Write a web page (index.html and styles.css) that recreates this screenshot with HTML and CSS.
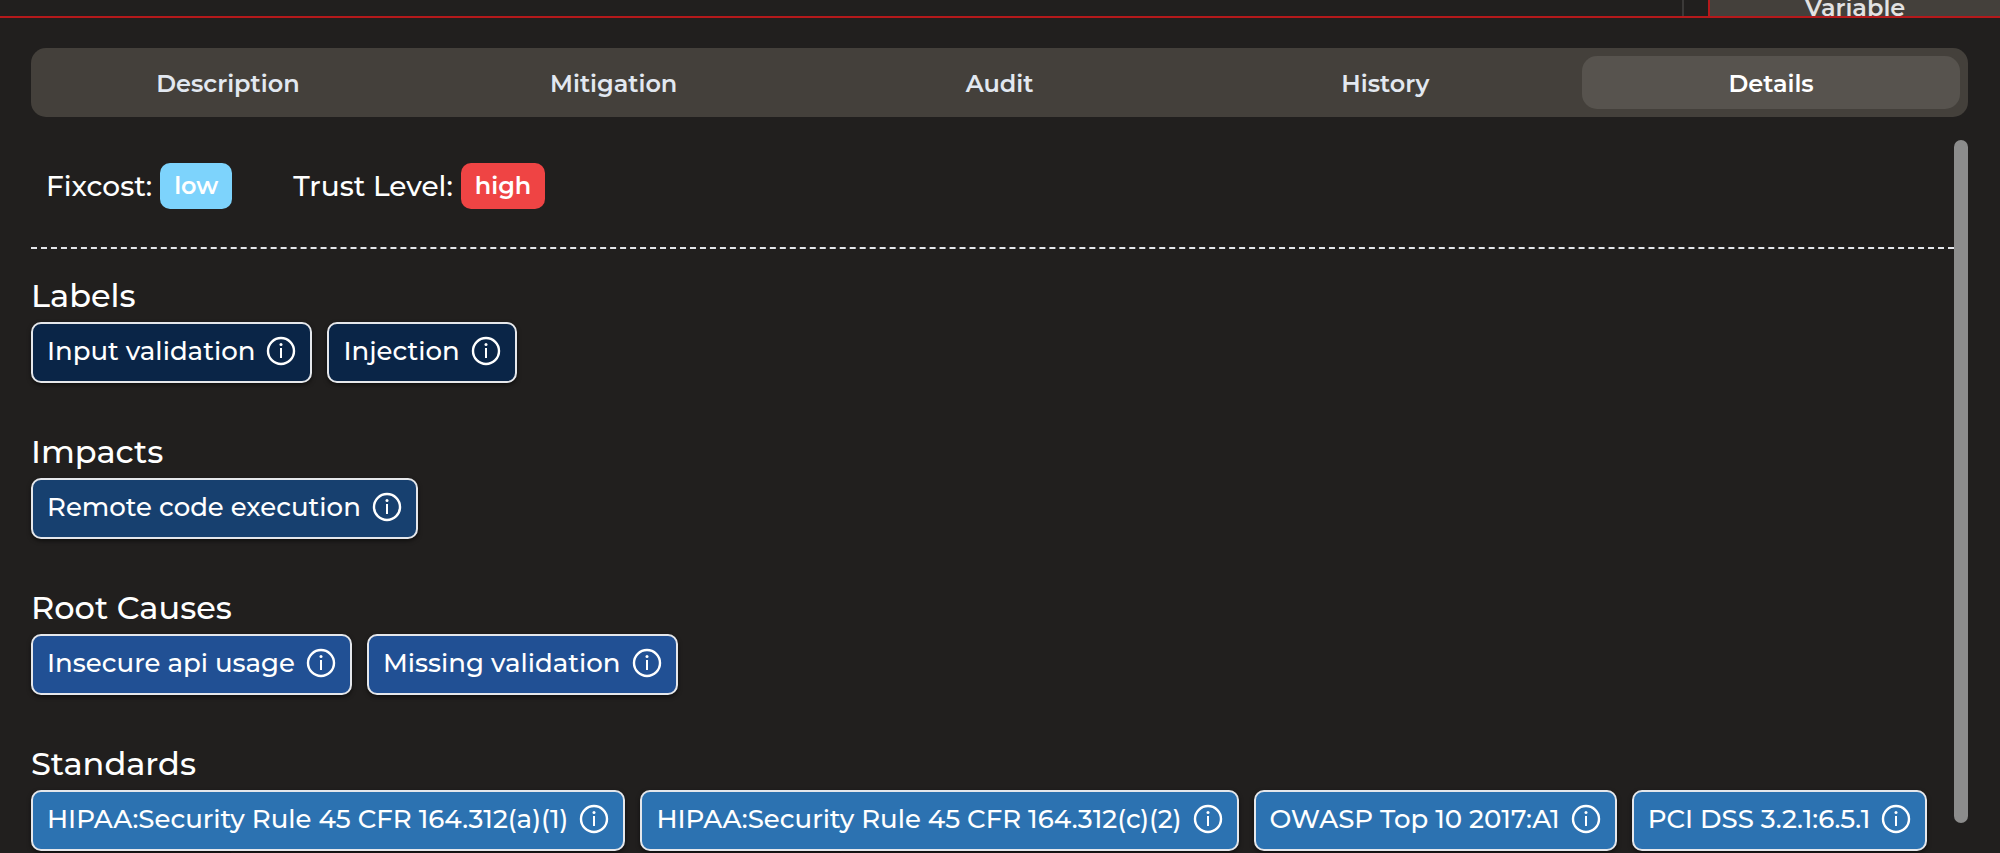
FILE: index.html
```html
<!DOCTYPE html>
<html lang="en">
<head>
<meta charset="utf-8">
<title>Finding details</title>
<link rel="stylesheet" href="styles.css">
</head>
<body>
<svg class="sprite" aria-hidden="true">
  <symbol id="info" viewBox="0 0 30 30">
    <circle cx="15" cy="15" r="13" fill="none" stroke="currentColor" stroke-width="2.4"/>
    <circle cx="15" cy="8.5" r="1.5" fill="currentColor"/>
    <path d="M15 12v10" fill="none" stroke="currentColor" stroke-width="2"/>
  </symbol>
</svg>
<header class="table-edge">
  <div class="table-cell"></div>
  <div class="table-tag"><span>Variable</span></div>
</header>
<main class="panel">
  <nav class="tabs" role="tablist">
    <button class="tab" role="tab">Description</button>
    <button class="tab" role="tab">Mitigation</button>
    <button class="tab" role="tab">Audit</button>
    <button class="tab" role="tab">History</button>
    <button class="tab tab-active" role="tab" aria-selected="true">Details</button>
  </nav>
  <div class="scroll">
    <div class="content">
      <div class="summary">
        <div class="fact">Fixcost: <span class="badge badge-low">low</span></div>
        <div class="fact">Trust Level: <span class="badge badge-high">high</span></div>
      </div>
      <section class="group labels">
        <h2>Labels</h2>
        <div class="chips">
          <button class="chip">Input validation<svg><use href="#info"/></svg></button>
          <button class="chip">Injection<svg><use href="#info"/></svg></button>
        </div>
      </section>
      <section class="group impacts">
        <h2>Impacts</h2>
        <div class="chips">
          <button class="chip">Remote code execution<svg><use href="#info"/></svg></button>
        </div>
      </section>
      <section class="group causes">
        <h2>Root Causes</h2>
        <div class="chips">
          <button class="chip">Insecure api usage<svg><use href="#info"/></svg></button>
          <button class="chip">Missing validation<svg><use href="#info"/></svg></button>
        </div>
      </section>
      <section class="group standards">
        <h2>Standards</h2>
        <div class="chips">
          <button class="chip">HIPAA:Security Rule 45 CFR 164.312(a)(1)<svg><use href="#info"/></svg></button>
          <button class="chip">HIPAA:Security Rule 45 CFR 164.312(c)(2)<svg><use href="#info"/></svg></button>
          <button class="chip">OWASP Top 10 2017:A1<svg><use href="#info"/></svg></button>
          <button class="chip">PCI DSS 3.2.1:6.5.1<svg><use href="#info"/></svg></button>
        </div>
      </section>
    </div>
    <div class="thumb"></div>
  </div>
</main>
</body>
</html>
```
FILE: styles.css
```css
* {
  box-sizing: border-box;
}

body {
  margin: 0;
  min-height: 100vh;
  overflow: hidden;
  background: #211f1e;
  color: #fff;
  font-family: Montserrat, Inter, sans-serif;
  font-size: 28px;
  font-weight: 500;
}

button {
  font: inherit;
  color: inherit;
  border: 0;
  margin: 0;
  cursor: pointer;
}

.sprite {
  display: none;
}

.table-edge {
  display: flex;
  justify-content: flex-end;
  height: 18px;
  border-bottom: 2px solid #b5191b;
  overflow: hidden;
}

.table-cell {
  width: 26px;
  border-left: 2px solid #3b3938;
}

.table-tag {
  display: flex;
  align-items: flex-end;
  justify-content: center;
  width: 292px;
  border-left: 2px solid #b5191b;
  background: #44403b;
  color: #e2e2e2;
  font-size: 24px;
  font-weight: 600;
  line-height: 28px;
}

.table-tag span {
  margin-bottom: -6px;
}

.panel {
  padding: 30px 32px 0 31px;
}

.tabs {
  display: grid;
  grid-template-columns: repeat(5, 1fr);
  gap: 8px;
  padding: 8px;
  border-radius: 15px;
  background: #44403b;
}

.tab {
  padding: 2px 0 0;
  border-radius: 15px;
  background: transparent;
  color: #e2e8f0;
  font-size: 24px;
  font-weight: 600;
  line-height: 51px;
}

.tab-active {
  background: #57534e;
  color: #fff;
}

.scroll {
  display: grid;
  grid-template-columns: 1fr 14px;
  align-items: start;
  margin-top: 23px;
}

.thumb {
  height: calc(100vh - 170px);
  border-radius: 7px;
  background: #8c8c8c;
}

.content {
  min-width: 0;
}

.summary {
  display: flex;
  gap: 61px;
  padding: 23px 15px 38px;
  border-bottom: 2px dashed #e5e7eb;
}

.fact {
  display: flex;
  align-items: center;
  gap: 8px;
}

.badge {
  padding: 0 14px;
  border-radius: 10px;
  font-size: 24px;
  font-weight: 600;
  line-height: 46px;
}

.badge-low {
  background: #7dd3fc;
}

.badge-high {
  background: #ef4444;
}

.group {
  padding-top: 27px;
  margin-bottom: 22px;
}

h2 {
  margin: 0;
  font-size: 32px;
  font-weight: 500;
  line-height: 40px;
  padding-bottom: 6px;
}

.chips {
  display: flex;
  gap: 15px;
}

.chip {
  display: flex;
  align-items: center;
  gap: 11px;
  padding: 11px 14px 14px;
  border: 2px solid #e5e7eb;
  border-radius: 10px;
  font-size: 26px;
  line-height: 32px;
  white-space: nowrap;
  box-shadow: 0 2px 4px #0008;
}

.chip svg {
  width: 30px;
  height: 30px;
}

.labels .chip {
  background: #0a2547;
}

.impacts .chip {
  background: #17406f;
}

.causes .chip {
  background: #215094;
}

.standards .chip {
  background: #2c72b1;
}
```
